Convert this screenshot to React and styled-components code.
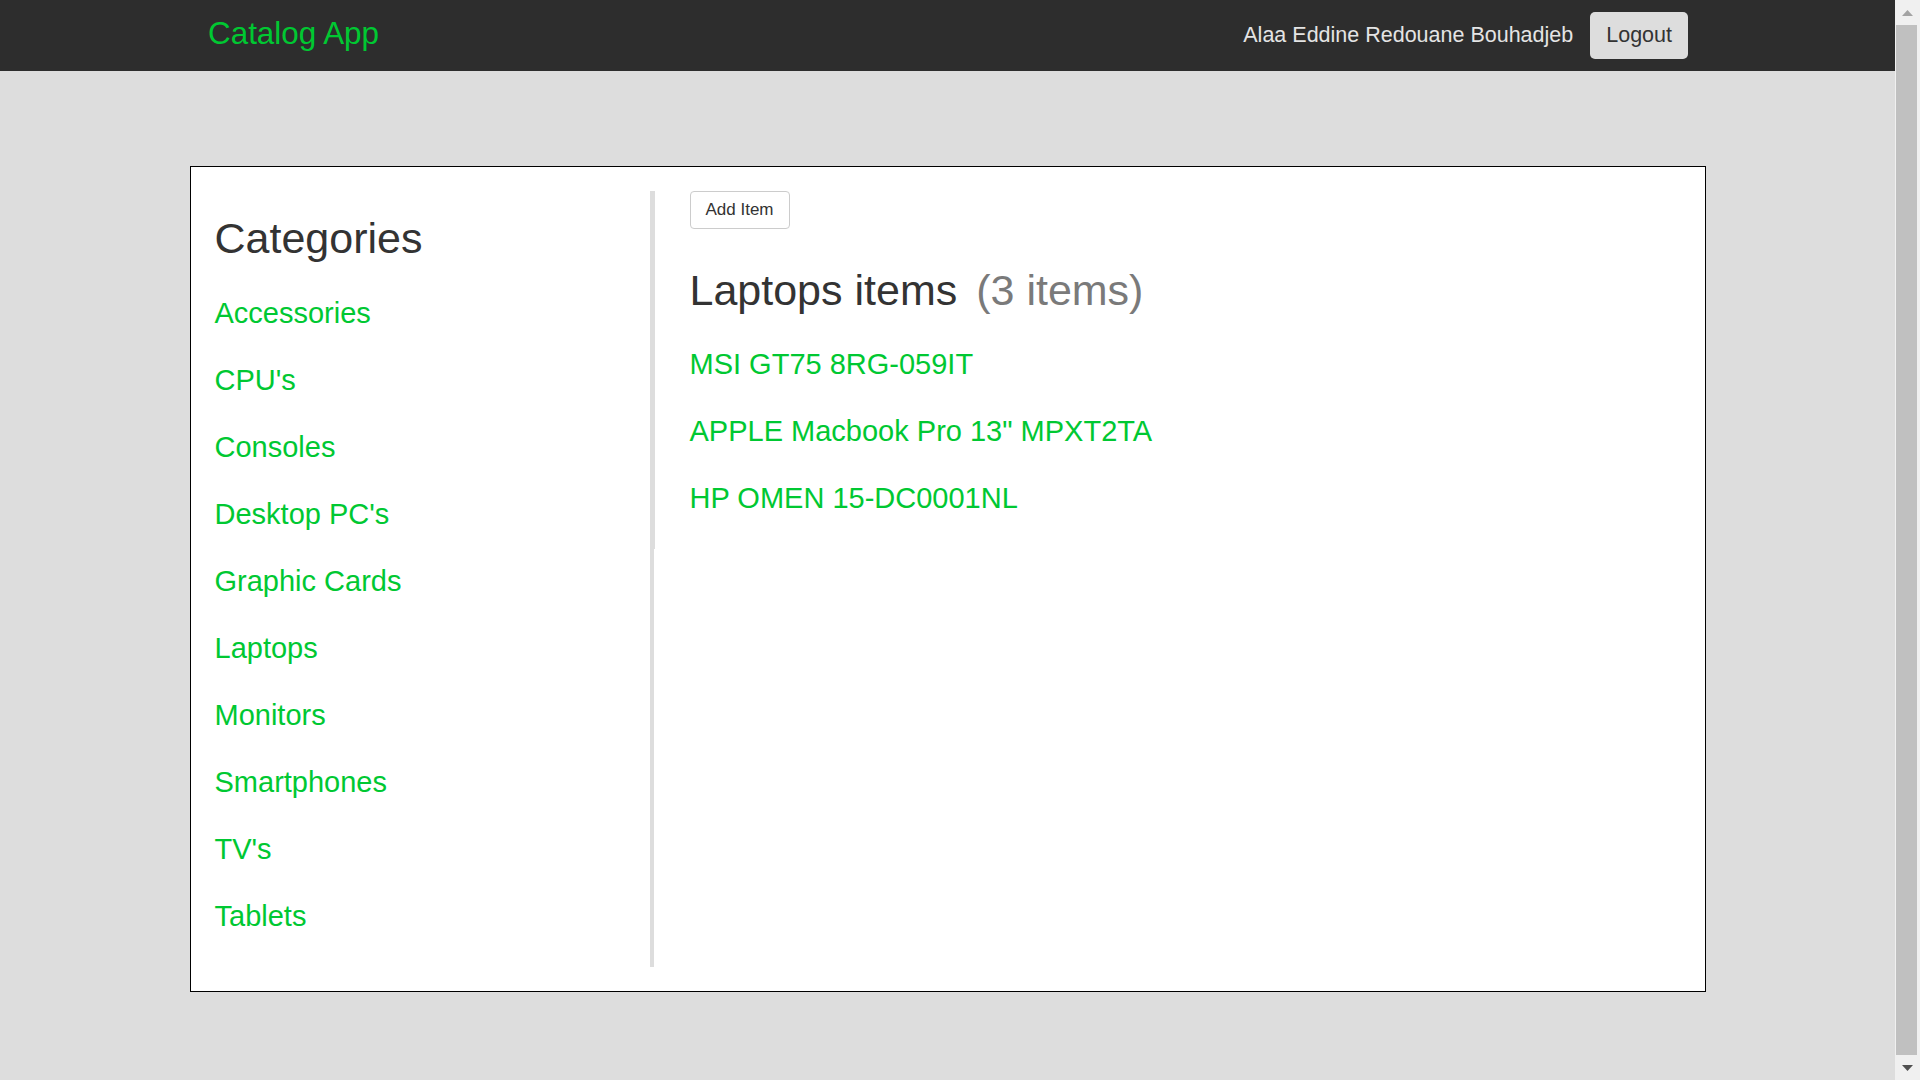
import React from "react";
import styled, { createGlobalStyle } from "styled-components";

const GlobalStyle = createGlobalStyle`
  html, body {
    margin: 0;
    padding: 0;
    background: #dddddd;
    font-family: "Liberation Sans", Arial, Helvetica, sans-serif;
  }
`;

const GREEN = "#00c832";

const Page = styled.div`
  margin-right: 25px;
  min-height: 100vh;
  padding-bottom: 107px;
  box-sizing: border-box;
`;

/* Window scrollbar drawn over the right edge, as in the reference */
const ScrollTrack = styled.div`
  position: fixed;
  top: 0;
  right: 0;
  width: 25px;
  height: 100vh;
  background: #f0f0f0;
  display: flex;
  flex-direction: column;
  align-items: center;
`;

const ScrollArrow = styled.div`
  height: 25px;
  width: 100%;
  display: flex;
  align-items: center;
  justify-content: center;
  flex-shrink: 0;
`;

const ScrollThumb = styled.div`
  flex: 1;
  width: 21px;
  margin-left: -2px;
  background: #c0c0c0;
`;

const NavBar = styled.header`
  height: 71px;
  background: #2d2d2d;
  display: flex;
  align-items: center;
  justify-content: space-between;
  padding: 0 207px 0 208px;
`;

const Brand = styled.a`
  font-size: 31.4px;
  line-height: 36px;
  color: ${GREEN};
  text-decoration: none;
  margin-bottom: 3px;
`;

const UserArea = styled.div`
  display: flex;
  align-items: center;
  gap: 17px;
`;

const UserName = styled.span`
  font-size: 21.5px;
  line-height: 25px;
  color: #e4e4e4;
`;

const LogoutButton = styled.button`
  height: 47px;
  padding: 0 16px;
  border: none;
  border-radius: 5px;
  background: #dddddd;
  color: #333333;
  font-family: inherit;
  font-size: 21.5px;
  cursor: pointer;
`;

const Card = styled.main`
  width: 80%;
  margin: 95px auto 0;
  box-sizing: border-box;
  background: #ffffff;
  border: 1px solid #000000;
  padding: 24px;
  display: flex;
  align-items: stretch;
`;

const Sidebar = styled.aside`
  width: 439px;
  flex-shrink: 0;
  box-sizing: border-box;
  border-right: 4px solid #dddddd;
  padding-bottom: 18px;
`;

const Heading = styled.h2`
  margin: ${(p) => (p.$top ? p.$top : "23px")} 0 ${(p) => (p.$bottom ? p.$bottom : "17px")};
  font-size: 43px;
  line-height: 48px;
  font-weight: 400;
  color: #333333;
`;

const Muted = styled.span`
  color: #7a7a7a;
  margin-left: 19px;
`;

const LinkList = styled.nav`
  display: flex;
  flex-direction: column;
  align-items: flex-start;
`;

const GreenLink = styled.a`
  display: block;
  font-size: 29px;
  line-height: 33px;
  padding: 18px 0 16px;
  color: ${GREEN};
  text-decoration: none;
  cursor: pointer;
`;

const Content = styled.section`
  flex: 1;
  align-self: flex-start;
  border-left: 1px solid #dddddd;
  padding: 0 0 18px 35px;
`;

const AddButton = styled.button`
  display: block;
  height: 38px;
  padding: 0 15px;
  border: 1px solid #cccccc;
  border-radius: 4px;
  background: #ffffff;
  color: #333333;
  font-family: inherit;
  font-size: 17px;
  cursor: pointer;
`;

const categories = [
  "Accessories",
  "CPU's",
  "Consoles",
  "Desktop PC's",
  "Graphic Cards",
  "Laptops",
  "Monitors",
  "Smartphones",
  "TV's",
  "Tablets",
];

const items = ["MSI GT75 8RG-059IT", 'APPLE Macbook Pro 13" MPXT2TA', "HP OMEN 15-DC0001NL"];

function Arrow({ up, color }) {
  return (
    <svg width="11" height="6" viewBox="0 0 11 6">
      <polygon points={up ? "0,6 11,6 5.5,0" : "0,0 11,0 5.5,6"} fill={color} />
    </svg>
  );
}

export default function App() {
  return (
    <Page>
      <GlobalStyle />
      <NavBar>
        <Brand>Catalog App</Brand>
        <UserArea>
          <UserName>Alaa Eddine Redouane Bouhadjeb</UserName>
          <LogoutButton>Logout</LogoutButton>
        </UserArea>
      </NavBar>
      <Card>
        <Sidebar>
          <Heading>Categories</Heading>
          <LinkList>
            {categories.map((c) => (
              <GreenLink key={c}>{c}</GreenLink>
            ))}
          </LinkList>
        </Sidebar>
        <Content>
          <AddButton>Add Item</AddButton>
          <Heading $top="37px" $bottom="16px">
            Laptops items<Muted>(3 items)</Muted>
          </Heading>
          <LinkList>
            {items.map((i) => (
              <GreenLink key={i}>{i}</GreenLink>
            ))}
          </LinkList>
        </Content>
      </Card>
      <ScrollTrack>
        <ScrollArrow>
          <Arrow up color="#a3a3a3" />
        </ScrollArrow>
        <ScrollThumb />
        <ScrollArrow>
          <Arrow color="#505050" />
        </ScrollArrow>
      </ScrollTrack>
    </Page>
  );
}
